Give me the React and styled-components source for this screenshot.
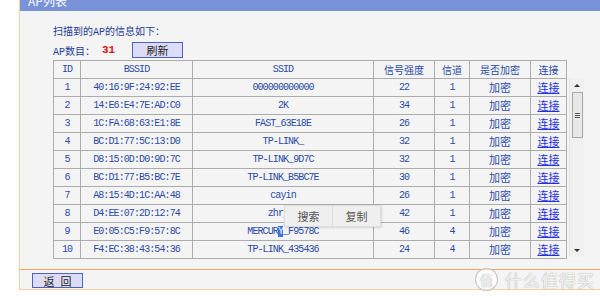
import styled, { createGlobalStyle } from 'styled-components';

const GlobalStyle = createGlobalStyle`
  html, body {
    margin: 0;
    padding: 0;
    background: #ffffff;
    overflow: hidden;
  }
  body {
    font-family: "Liberation Mono", "Noto Sans CJK SC", monospace;
  }
`;

const color = {
  panel: '#f4f4f4',
  orange: '#f7a45a',
  orangeLight: '#fbcda0',
  bar: '#7a92d8',
  text: '#1f3d96',
  cell: '#2a4aa6',
  link: '#1f2fe6',
  line: '#acacac',
};

const Page = styled.div`
  position: relative;
  width: 600px;
  height: 298px;
  padding-left: 19px;
  box-sizing: border-box;
`;

const Panel = styled.div`
  background: ${color.panel};
  border-left: 1px solid ${color.orangeLight};
  border-bottom: 1px solid ${color.orangeLight};
`;

const TitleBar = styled.div`
  height: 11px;
  overflow: hidden;
  background: ${color.bar};
  padding-left: 8px;

  span {
    display: block;
    margin-top: -6px;
    font-family: "Noto Sans CJK SC", "Liberation Sans", sans-serif;
    font-size: 12px;
    line-height: 14px;
    color: #ffffff;
  }
`;

const Content = styled.div`
  padding: 16px 0 10px 33px;
`;

const Intro = styled.div`
  font-size: 10px;
  line-height: 12px;
  color: ${color.text};
`;

const CountRow = styled.div`
  display: flex;
  align-items: center;
  height: 16px;
  margin-top: 3px;
  font-size: 10px;
  color: ${color.text};

  .count {
    margin-left: 7px;
    width: 30px;
    color: #e01010;
    font-weight: bold;
    font-size: 11px;
  }
`;

const Button = styled.button`
  display: flex;
  align-items: center;
  justify-content: center;
  width: ${(p) => p.$w}px;
  height: ${(p) => p.$h}px;
  padding: 0 0 0 ${(p) => p.$spacing || 0}px;
  background: #dcdcf8;
  border: 1px solid #4f62c0;
  font-family: "Noto Sans CJK SC", sans-serif;
  font-size: 11px;
  line-height: 12px;
  letter-spacing: ${(p) => p.$spacing || 0}px;
  color: #222;
`;

const TableArea = styled.div`
  position: relative;
  display: flex;
  align-items: flex-start;
  margin-top: 2px;
`;

const Table = styled.table`
  border-collapse: collapse;
  table-layout: fixed;
  width: 513px;
  border: 1px solid ${color.line};

  th, td {
    padding: 0;
    border: 1px solid ${color.line};
    text-align: center;
    font-weight: normal;
    color: ${color.cell};
  }
`;

const Cell = styled.div`
  height: 17px;
  overflow: hidden;
  white-space: nowrap;
  font-family: ${(p) =>
    p.$cjk ? '"Noto Sans CJK SC", sans-serif' : '"Liberation Mono", "Noto Sans CJK SC", monospace'};
  font-size: ${(p) => (p.$big ? 11 : 10)}px;
  line-height: 17px;
  letter-spacing: ${(p) => (p.$cjk ? 0 : -0.9)}px;
`;

const ConnectLink = styled.a`
  color: ${color.link};
  text-decoration: underline;
`;

const Selected = styled.span`
  background: #2f78e4;
  color: #ffffff;
`;

const Scrollbar = styled.div`
  display: flex;
  flex-direction: column;
  align-items: center;
  width: 14px;
  height: 179px;
  margin: 18px 0 0 2px;
  background: #f0f0f0;
  border-left: 1px solid #e4e4e4;
`;

const Arrow = styled.div`
  width: 0;
  height: 0;
  margin: 6px 0 5px;
  border-left: 3px solid transparent;
  border-right: 3px solid transparent;
  ${(p) => (p.$down ? 'border-top: 3px solid #333;' : 'border-bottom: 3px solid #333;')}
`;

const Thumb = styled.div`
  display: flex;
  flex-direction: column;
  justify-content: center;
  align-items: center;
  gap: 1px;
  width: 11px;
  height: 46px;
  background: #e8e8e8;
  border: 1px solid #a8a8a8;
  box-sizing: border-box;

  i {
    display: block;
    width: 5px;
    height: 1px;
    background: #555;
  }
`;

const Track = styled.div`
  flex: 1;
`;

const ContextMenu = styled.div`
  position: absolute;
  left: 231px;
  top: 145px;
  display: flex;
  height: 20px;
  background: #efefef;
  border: 1px solid #dcdcdc;
  box-shadow: 1px 1px 2px rgba(0, 0, 0, 0.12);
  z-index: 2;
`;

const MenuItem = styled.div`
  display: flex;
  align-items: center;
  justify-content: center;
  width: 47px;
  font-family: "Noto Sans CJK SC", sans-serif;
  font-size: 11px;
  color: #555;
  & + & {
    border-left: 1px solid #dcdcdc;
  }
`;

const Footer = styled.div`
  height: 20px;
  padding: 3px 0 0 12px;
  box-sizing: border-box;
  border-top: 1px solid ${color.orange};
`;

const Watermark = styled.div`
  position: absolute;
  right: 5px;
  top: 268px;
  display: flex;
  align-items: center;
  gap: 7px;
  font-family: "Noto Sans CJK SC", sans-serif;
  color: rgba(255, 255, 255, 0.9);
  text-shadow: 0 0 1px rgba(0, 0, 0, 0.45);

  .badge {
    display: flex;
    align-items: center;
    justify-content: center;
    width: 21px;
    height: 21px;
    border-radius: 50%;
    border: 1px solid rgba(160, 160, 160, 0.6);
    background: rgba(255, 255, 255, 0.6);
    font-size: 13px;
  }
  .name {
    font-size: 17px;
    line-height: 22px;
    letter-spacing: 1px;
  }
`;

const rows = [
  ['1', '40:16:9F:24:92:EE', '000000000000', '22', '1'],
  ['2', '14:E6:E4:7E:AD:C0', '2K', '34', '1'],
  ['3', '1C:FA:68:63:E1:8E', 'FAST_63E18E', '26', '1'],
  ['4', 'BC:D1:77:5C:13:D0', 'TP-LINK_', '32', '1'],
  ['5', 'D8:15:0D:D0:9D:7C', 'TP-LINK_9D7C', '32', '1'],
  ['6', 'BC:D1:77:B5:BC:7E', 'TP-LINK_B5BC7E', '30', '1'],
  ['7', 'A8:15:4D:1C:AA:48', 'cayin', '26', '1'],
  ['8', 'D4:EE:07:2D:12:74', 'zhrjia', '42', '1'],
  ['9', 'E0:05:C5:F9:57:8C', 'sel', '46', '4'],
  ['10', 'F4:EC:38:43:54:36', 'TP-LINK_435436', '24', '4'],
];

const widths = [27, 112, 181, 61, 35, 61, 36];

const App = () => {
  return (
    <>
      <GlobalStyle />
      <Page>
        <Panel>
          <TitleBar>
            <span>AP列表</span>
          </TitleBar>
          <Content>
            <Intro>扫描到的AP的信息如下：</Intro>
            <CountRow>
              <span>AP数目：</span>
              <span className="count">31</span>
              <Button $w={51} $h={16}>刷新</Button>
            </CountRow>
            <TableArea>
              <Table>
                <colgroup>
                  {widths.map((w, i) => (
                    <col key={i} style={{ width: w }} />
                  ))}
                </colgroup>
                <thead>
                  <tr>
                    <th><Cell>ID</Cell></th>
                    <th><Cell>BSSID</Cell></th>
                    <th><Cell>SSID</Cell></th>
                    <th><Cell $cjk>信号强度</Cell></th>
                    <th><Cell $cjk>信道</Cell></th>
                    <th><Cell $cjk>是否加密</Cell></th>
                    <th><Cell $cjk>连接</Cell></th>
                  </tr>
                </thead>
                <tbody>
                  {rows.map(([id, bssid, ssid, signal, channel]) => (
                    <tr key={id}>
                      <td><Cell>{id}</Cell></td>
                      <td><Cell>{bssid}</Cell></td>
                      <td>
                        <Cell>
                          {ssid === 'sel' ? (
                            <>
                              MERCUR<Selected>Y</Selected>_F9578C
                            </>
                          ) : (
                            ssid
                          )}
                        </Cell>
                      </td>
                      <td><Cell>{signal}</Cell></td>
                      <td><Cell>{channel}</Cell></td>
                      <td><Cell $cjk $big>加密</Cell></td>
                      <td>
                        <Cell $cjk $big>
                          <ConnectLink>连接</ConnectLink>
                        </Cell>
                      </td>
                    </tr>
                  ))}
                </tbody>
              </Table>
              <Scrollbar>
                <Arrow />
                <Thumb>
                  <i />
                  <i />
                  <i />
                </Thumb>
                <Track />
                <Arrow $down />
              </Scrollbar>
              <ContextMenu>
                <MenuItem>搜索</MenuItem>
                <MenuItem>复制</MenuItem>
              </ContextMenu>
            </TableArea>
          </Content>
          <Footer>
            <Button $w={51} $h={15} $spacing={6}>返回</Button>
          </Footer>
        </Panel>
        <Watermark>
          <div className="badge">值</div>
          <div className="name">什么值得买</div>
        </Watermark>
      </Page>
    </>
  );
};

export default App;
